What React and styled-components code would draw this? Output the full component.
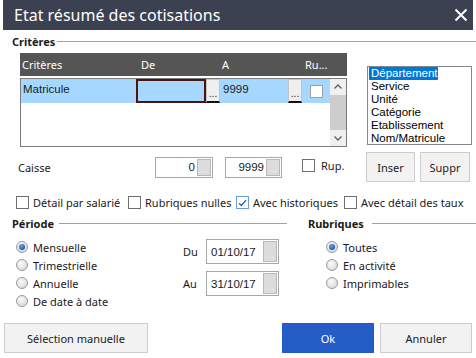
import styled, { createGlobalStyle } from 'styled-components';

const Global = createGlobalStyle`
  html, body { margin: 0; padding: 0; background: #fff; }
  body {
    font-family: "Noto Sans", "Open Sans", sans-serif;
    font-size: 11px;
    color: #1a1a1a;
  }
`;

const Window = styled.div`
  width: 476px;
  height: 358px;
  display: flex;
  flex-direction: column;
  overflow: hidden;
  background: #fff;
`;

const TitleBar = styled.div`
  height: 30px;
  margin: 0 3px;
  padding: 0 5px 0 11px;
  background: #3c4151;
  color: #fff;
  font-size: 16px;
  display: flex;
  align-items: center;
  justify-content: space-between;
`;

const GroupHeader = styled.div`
  display: flex;
  align-items: center;
  gap: ${p => p.$gap}px;
  height: 12px;
  font-weight: bold;
  font-size: 11px;
  color: #1a1a1a;
  &::after {
    content: '';
    flex: 1;
    height: 1px;
    background: #a0a0a0;
  }
`;

const Criteria = styled.div`
  display: flex;
  margin-top: 6px;
  padding-left: 20px;
`;

const Grid = styled.div`
  width: 327px;
  display: flex;
  flex-direction: column;
  font-family: "Liberation Sans", Arial, sans-serif;
`;

const GridHead = styled.div`
  height: 23px;
  background: #555555;
  color: #fff;
  display: grid;
  grid-template-columns: 119px 81px 83px 1fr;
  align-items: center;
  padding-left: 2px;
  font-family: "Noto Sans", sans-serif;
  font-size: 11px;
`;

const GridBody = styled.div`
  margin-top: 2px;
  height: 69px;
  box-sizing: border-box;
  border: 1px solid #7a7a7a;
  display: flex;
`;

const Rows = styled.div`
  flex: 1;
`;

const Row = styled.div`
  height: 24px;
  display: flex;
  background: #a6d8ff;
  font-size: 11.5px;
`;

const Cell = styled.div`
  width: ${p => p.$w}px;
  box-sizing: border-box;
  padding: 4px 0 0 ${p => p.$pad || 2}px;
  ${p => p.$edit && 'border: 2px solid #4b160c;'}
`;

const RowButton = styled.div`
  width: 14px;
  height: 24px;
  box-sizing: border-box;
  background: #efefef;
  border: 1px solid #c4c4c4;
  border-bottom: 2px solid #111;
  display: flex;
  align-items: flex-end;
  justify-content: center;
  font-size: 10px;
  line-height: 14px;
`;

const CheckCell = styled.div`
  flex: 1;
  display: flex;
  align-items: center;
  padding-left: 8px;
`;

const SmallBox = styled.div`
  width: 13px;
  height: 13px;
  box-sizing: border-box;
  background: #fff;
  border: 1px solid #a0a0a0;
`;

const Scroll = styled.div`
  width: 16px;
  display: flex;
  flex-direction: column;
  background: #f0f0f0;
`;

const ScrollArrow = styled.div`
  height: 16px;
  display: flex;
  align-items: center;
  justify-content: center;
`;

const Thumb = styled.div`
  height: 36px;
  background: #cdcdcd;
`;

const ListBox = styled.div`
  margin: 13px 0 0 20px;
  width: 105px;
  height: 79px;
  box-sizing: border-box;
  border: 1px solid #828790;
  padding-left: 1px;
  font-family: "Liberation Sans", Arial, sans-serif;
  font-size: 11.5px;
  display: flex;
  flex-direction: column;
  align-items: flex-start;
`;

const ListItem = styled.div`
  height: 13px;
  line-height: 13px;
  padding: 0 1px 0 2px;
  background: ${p => (p.$sel ? '#0078d7' : 'transparent')};
  color: ${p => (p.$sel ? '#fff' : '#000')};
`;

const CaisseRow = styled.div`
  margin-top: 5px;
  height: 30px;
  display: flex;
  align-items: center;
  padding: 0 6px 0 18px;
`;

const Label = styled.span`
  width: ${p => p.$w}px;
  font-size: 11px;
`;

const Field = styled.div`
  width: ${p => p.$w}px;
  height: ${p => p.$h || 21}px;
  margin-right: ${p => p.$mr || 0}px;
  box-sizing: border-box;
  border: 1px solid #a8a8a8;
  background: #fff;
  display: flex;
  font-family: "Liberation Sans", Arial, sans-serif;
  font-size: 11.5px;
`;

const FieldValue = styled.div`
  flex: 1;
  display: flex;
  align-items: center;
  justify-content: ${p => (p.$right ? 'flex-end' : 'flex-start')};
  padding: 0 1px 0 4px;
`;

const FieldButton = styled.div`
  width: 14px;
  box-sizing: border-box;
  margin: 1px;
  background: #dcdcdc;
  border: 1px solid #b8b8b8;
  color: #f4f4f4;
  font-size: 9px;
  display: flex;
  align-items: flex-end;
  justify-content: center;
  line-height: 12px;
`;

const Check = styled.label`
  display: flex;
  align-items: center;
  gap: ${p => p.$gap || 4}px;
  font-size: 11px;
  white-space: nowrap;
  ${p => p.$top && 'align-self: flex-start; margin-top: 6px;'}
`;

const Box = styled.span`
  width: 13px;
  height: 13px;
  box-sizing: border-box;
  border: 1px solid ${p => (p.$on ? '#6f9ad8' : '#707070')};
  background: #fff;
  display: flex;
  align-items: center;
  justify-content: center;
`;

const SideButtons = styled.div`
  margin-left: auto;
  display: flex;
  gap: 5px;
`;

const Button = styled.button`
  width: ${p => p.$w}px;
  height: 30px;
  box-sizing: border-box;
  font-family: "Noto Sans", sans-serif;
  font-size: 11px;
  color: ${p => (p.$primary ? '#fff' : '#1a1a1a')};
  background: ${p => (p.$primary ? '#255dc6' : '#f2f2f2')};
  border: 1px solid ${p => (p.$primary ? '#255dc6' : '#cccccc')};
  padding: 0;
`;

const CheckRow = styled.div`
  margin-top: 13px;
  height: 13px;
  padding-left: 16px;
  display: grid;
  grid-template-columns: 112px 108px 108px auto;
  align-items: center;
`;

const Sections = styled.div`
  margin-top: 9px;
  display: flex;
`;

const Section = styled.div`
  width: ${p => p.$w || 'auto'};
  flex: ${p => (p.$w ? 'none' : 1)};
  margin-left: ${p => p.$ml}px;
`;

const SectionBody = styled.div`
  display: flex;
  padding-left: ${p => p.$pl}px;
`;

const RadioList = styled.div`
  width: ${p => p.$w || 'auto'};
  margin-top: 9px;
  display: flex;
  flex-direction: column;
`;

const Radio = styled.div`
  height: 18px;
  display: flex;
  align-items: center;
  gap: 5px;
  font-size: 11px;
`;

const Dot = styled.span`
  width: 12px;
  height: 12px;
  box-sizing: border-box;
  border-radius: 50%;
  border: 1px solid #9a9a9a;
  background: radial-gradient(circle at 40% 35%, #fbfbfb 0%, #d2d2d2 100%);
  display: flex;
  align-items: center;
  justify-content: center;
  &::after {
    content: '';
    display: ${p => (p.$on ? 'block' : 'none')};
    width: 6px;
    height: 6px;
    border-radius: 50%;
    background: radial-gradient(circle at 40% 35%, #6aa5ec 0%, #1d57b4 70%);
  }
`;

const DateCol = styled.div`
  margin-top: 10px;
  display: flex;
  flex-direction: column;
  gap: 7px;
`;

const DateRow = styled.div`
  display: flex;
  align-items: center;
`;

const Footer = styled.div`
  margin-top: auto;
  padding: 0 4px 5px;
  display: flex;
  gap: 6px;
`;

const Spacer = styled.div`
  flex: 1;
`;

function CheckMark() {
  return (
    <svg width="9" height="8" viewBox="0 0 9 8">
      <path d="M1 4.2 L3.4 6.5 L8 1.2" fill="none" stroke="#2f62b4" strokeWidth="1.3" />
    </svg>
  );
}

function CheckItem({ label, on, top }) {
  return (
    <Check $top={top} $gap={top ? 6 : 4}>
      <Box $on={on}>{on && <CheckMark />}</Box>
      {label}
    </Check>
  );
}

function DateField({ label, value }) {
  return (
    <DateRow>
      <Label $w={23}>{label}</Label>
      <Field $w={73} $h={25}>
        <FieldValue>{value}</FieldValue>
        <FieldButton>...</FieldButton>
      </Field>
    </DateRow>
  );
}

export default function App() {
  const liste = ['Département', 'Service', 'Unité', 'Catégorie', 'Etablissement', 'Nom/Matricule'];
  return (
    <Window>
      <Global />
      <TitleBar>
        <span>Etat résumé des cotisations</span>
        <svg width="14" height="14" viewBox="0 0 14 14">
          <path d="M1.5 1.5 L12.5 12.5 M12.5 1.5 L1.5 12.5" stroke="#fff" strokeWidth="2" />
        </svg>
      </TitleBar>

      <GroupHeader $gap={2} style={{ marginTop: 5, marginLeft: 12 }}>Critères</GroupHeader>

      <Criteria>
        <Grid>
          <GridHead>
            <span>Critères</span>
            <span>De</span>
            <span>A</span>
            <span>Ru...</span>
          </GridHead>
          <GridBody>
            <Rows>
              <Row>
                <Cell $w={115}>Matricule</Cell>
                <Cell $w={70} $edit />
                <RowButton>...</RowButton>
                <Cell $w={68} $pad={3}>9999</Cell>
                <RowButton>...</RowButton>
                <CheckCell>
                  <SmallBox />
                </CheckCell>
              </Row>
            </Rows>
            <Scroll>
              <ScrollArrow>
                <svg width="8" height="5" viewBox="0 0 8 5">
                  <path d="M0.5 4.5 L4 1 L7.5 4.5" fill="none" stroke="#606060" strokeWidth="1.4" />
                </svg>
              </ScrollArrow>
              <Thumb />
              <Spacer />
              <ScrollArrow>
                <svg width="8" height="5" viewBox="0 0 8 5">
                  <path d="M0.5 0.5 L4 4 L7.5 0.5" fill="none" stroke="#606060" strokeWidth="1.4" />
                </svg>
              </ScrollArrow>
            </Scroll>
          </GridBody>
        </Grid>
        <ListBox>
          {liste.map((l, i) => (
            <ListItem key={l} $sel={i === 0}>{l}</ListItem>
          ))}
        </ListBox>
      </Criteria>

      <CaisseRow>
        <Label $w={137}>Caisse</Label>
        <Field $w={58} $mr={12}>
          <FieldValue $right>0</FieldValue>
          <FieldButton>...</FieldButton>
        </Field>
        <Field $w={57} $mr={20}>
          <FieldValue $right>9999</FieldValue>
          <FieldButton>...</FieldButton>
        </Field>
        <CheckItem label="Rup." top />
        <SideButtons>
          <Button $w={49}>Inser</Button>
          <Button $w={50}>Suppr</Button>
        </SideButtons>
      </CaisseRow>

      <CheckRow>
        <CheckItem label="Détail par salarié" />
        <CheckItem label="Rubriques nulles" />
        <CheckItem label="Avec historiques" on />
        <CheckItem label="Avec détail des taux" />
      </CheckRow>

      <Sections>
        <Section $w="275px" $ml={12}>
          <GroupHeader $gap={5}>Période</GroupHeader>
          <SectionBody $pl={4}>
            <RadioList $w="167px">
              <Radio><Dot $on />Mensuelle</Radio>
              <Radio><Dot />Trimestrielle</Radio>
              <Radio><Dot />Annuelle</Radio>
              <Radio><Dot />De date à date</Radio>
            </RadioList>
            <DateCol>
              <DateField label="Du" value="01/10/17" />
              <DateField label="Au" value="31/10/17" />
            </DateCol>
          </SectionBody>
        </Section>
        <Section $ml={21}>
          <GroupHeader $gap={8}>Rubriques</GroupHeader>
          <SectionBody $pl={18}>
            <RadioList>
              <Radio><Dot $on />Toutes</Radio>
              <Radio><Dot />En activité</Radio>
              <Radio><Dot />Imprimables</Radio>
            </RadioList>
          </SectionBody>
        </Section>
      </Sections>

      <Footer>
        <Button $w={144}>Sélection manuelle</Button>
        <Spacer />
        <Button $w={92} $primary>Ok</Button>
        <Button $w={92}>Annuler</Button>
      </Footer>
    </Window>
  );
}
